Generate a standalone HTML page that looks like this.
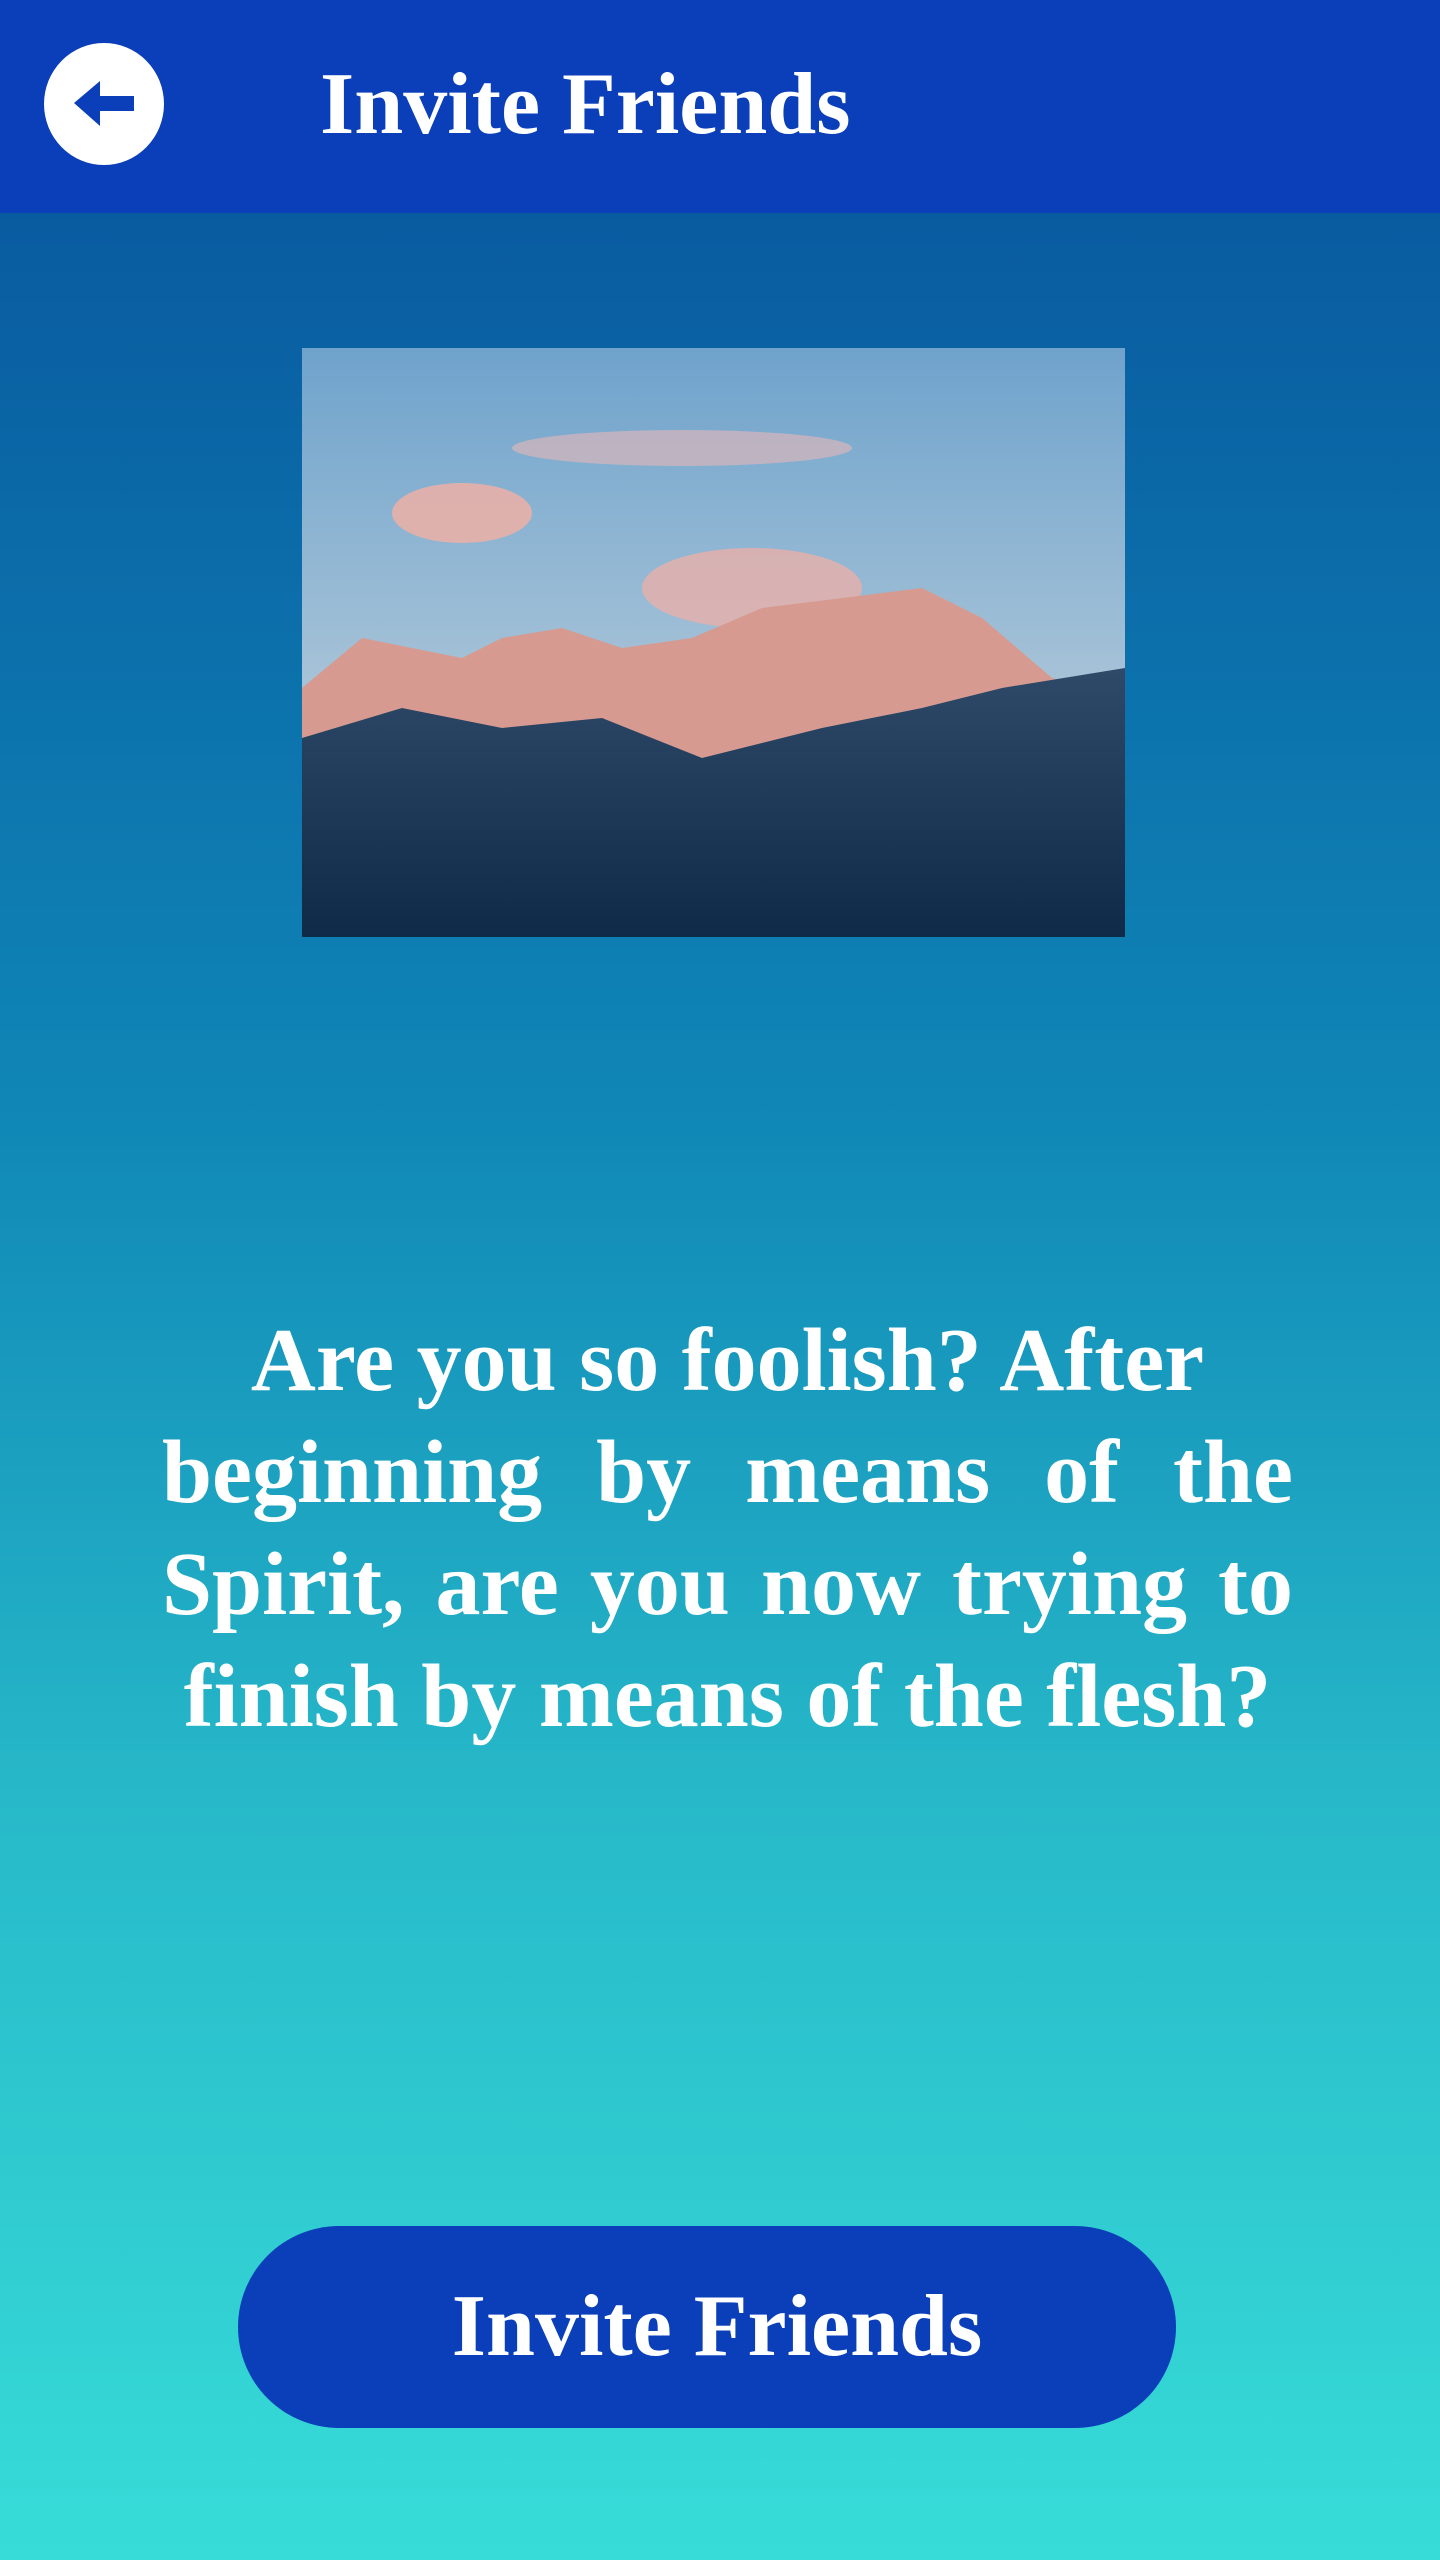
<!DOCTYPE html>
<html><head><meta charset="utf-8"><style>
html,body{margin:0;padding:0}
body{width:1440px;height:2560px;position:relative;overflow:hidden;font-family:"Liberation Serif",serif;background:linear-gradient(180deg,#095ba0 212px,#0f86b6 1100px,#27b9c9 1800px,#37dcd8 2560px)}
.hdr{position:absolute;left:0;top:0;width:1440px;height:213px;background:#0b3fba}
.back{position:absolute;left:44px;top:43px;width:120px;height:122px;border-radius:50%;background:#fff}
.title{position:absolute;left:320px;top:50px;font-size:88px;font-weight:bold;color:#fff;line-height:110px}
.img{position:absolute;left:302px;top:348px;width:823px;height:589px}
.q{position:absolute;left:162px;width:1131px;font-size:90px;font-weight:bold;color:#fff;line-height:112px}
.j{text-align:justify;text-align-last:justify}
.c{text-align:center}
.btn{position:absolute;left:238px;top:2226px;width:938px;height:202px;border-radius:101px;background:#0b3fba;color:#fff;font-size:88px;font-weight:bold;text-align:center;line-height:202px;box-sizing:border-box;padding-left:20px}
</style></head><body>
<div class="hdr"></div>
<div class="back"><svg width="120" height="122" viewBox="44 43 120 122"><polygon points="74,103 100,81 100,96 134,96 134,111 100,111 100,126" fill="#0b3fba"/></svg></div>
<div class="title">Invite Friends</div>
<svg class="img" viewBox="0 0 823 589" preserveAspectRatio="none">
<defs><linearGradient id="s" x1="0" y1="0" x2="0" y2="1"><stop offset="0" stop-color="#6fa3cc"/><stop offset="0.6" stop-color="#a9c4d8"/><stop offset="1" stop-color="#c9c8d0"/></linearGradient>
<linearGradient id="g" x1="0" y1="0" x2="0" y2="1"><stop offset="0" stop-color="#2e4a68"/><stop offset="1" stop-color="#0f2a48"/></linearGradient></defs>
<rect width="823" height="589" fill="url(#s)"/>
<ellipse cx="160" cy="165" rx="70" ry="30" fill="#e8b0a8" opacity="0.9"/>
<ellipse cx="380" cy="100" rx="170" ry="18" fill="#e6b8b8" opacity="0.6"/>
<ellipse cx="450" cy="240" rx="110" ry="40" fill="#e8b0aa" opacity="0.8"/>
<polygon points="0,340 60,290 110,300 160,310 200,290 260,280 320,300 390,290 460,260 540,250 620,240 680,270 750,330 823,350 823,420 0,420" fill="#d69a90"/>
<polygon points="0,390 100,360 200,380 300,370 400,410 520,380 620,360 700,340 823,320 823,589 0,589" fill="url(#g)"/>
</svg>
<div class="q c" style="top:1305px">Are you so foolish? After</div>
<div class="q j" style="top:1417px">beginning by means of the</div>
<div class="q j" style="top:1529px">Spirit, are you now trying to</div>
<div class="q c" style="top:1641px">finish by means of the flesh?</div>
<div class="btn">Invite Friends</div>
</body></html>
